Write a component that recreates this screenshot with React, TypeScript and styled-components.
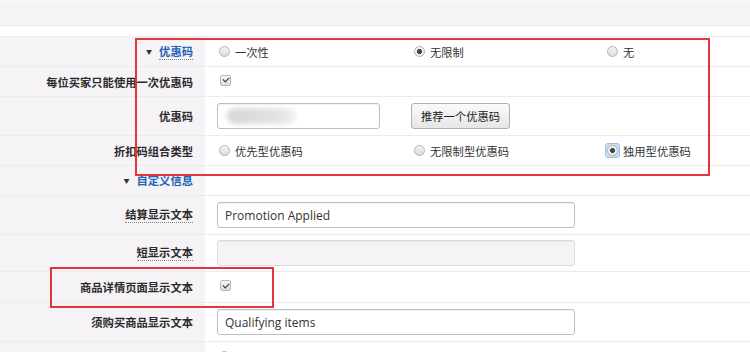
import React from 'react';
import styled, { createGlobalStyle } from 'styled-components';

const GlobalStyle = createGlobalStyle`
  html, body {
    margin: 0;
    padding: 0;
    background: #fff;
  }
  body {
    font-family: "Noto Sans CJK SC", "Open Sans", sans-serif;
    color: #333;
    overflow: hidden;
  }
`;

type RadioOption = { label: string; checked?: boolean; focused?: boolean };

const App: React.FC = () => {
  return (
    <Page>
      <GlobalStyle />
      <TopBand />
      <Form>
        <Row $h={30}>
          <Label>
            <Toggle>
              <Caret>▼</Caret>
              <Hint $blue>优惠码</Hint>
            </Toggle>
          </Label>
          <Value>
            <RadioGroup
              name="usage"
              options={[{ label: '一次性' }, { label: '无限制', checked: true }, { label: '无' }]}
            />
          </Value>
        </Row>
        <Row $h={30}>
          <Label>每位买家只能使用一次优惠码</Label>
          <Value>
            <Check />
          </Value>
        </Row>
        <Row $h={39}>
          <Label>优惠码</Label>
          <Value>
            <InputBox $w={163}>
              <Redacted />
            </InputBox>
            <Button>推荐一个优惠码</Button>
          </Value>
        </Row>
        <Row $h={30}>
          <Label>折扣码组合类型</Label>
          <Value>
            <RadioGroup
              name="combo"
              options={[
                { label: '优先型优惠码' },
                { label: '无限制型优惠码' },
                { label: '独用型优惠码', checked: true, focused: true },
              ]}
            />
          </Value>
        </Row>
        <Row $h={30}>
          <Label>
            <Toggle $plain>
              <Caret>▼</Caret>
              <Hint $blue $plain>自定义信息</Hint>
            </Toggle>
          </Label>
          <Value />
        </Row>
        <Row $h={39}>
          <Label>
            <Hint>结算显示文本</Hint>
          </Label>
          <Value>
            <InputBox $w={358}>Promotion Applied</InputBox>
          </Value>
        </Row>
        <Row $h={37}>
          <Label>
            <Hint>短显示文本</Hint>
          </Label>
          <Value>
            <InputBox $w={358} $disabled />
          </Value>
        </Row>
        <Row $h={31}>
          <Label>商品详情页面显示文本</Label>
          <Value>
            <Check />
          </Value>
        </Row>
        <Row $h={39}>
          <Label>须购买商品显示文本</Label>
          <Value>
            <InputBox $w={358}>Qualifying items</InputBox>
          </Value>
        </Row>
        <Row $h={30}>
          <Label />
          <Value>
            <RadioGroup name="tail" options={[{ label: '提交时显示' }]} />
          </Value>
        </Row>
      </Form>
      <Annotation $top={38} $left={135} $w={575} $h={138} />
      <Annotation $top={267} $left={50} $w={224} $h={41} />
    </Page>
  );
};

const RadioGroup: React.FC<{ name: string; options: RadioOption[] }> = ({ options }) => (
  <Radios>
    {options.map((o, i) => (
      <RadioItem key={i}>
        <RadioWrap $focused={o.focused}>
          <RadioDot $checked={o.checked} />
        </RadioWrap>
        <span>{o.label}</span>
      </RadioItem>
    ))}
  </Radios>
);

export default App;

const Page = styled.div`
  position: relative;
  width: 750px;
  height: 352px;
  overflow: hidden;
  font-size: 11.3px;
`;

const TopBand = styled.div`
  height: 26px;
  background: #f6f3f6;
  border-top: 1px solid #fbfafb;
  border-bottom: 1px solid #e8e5e8;
  box-sizing: border-box;
  margin-bottom: 10px;
`;

const Form = styled.div`
  border-top: 1px solid #ebebeb;
`;

const Row = styled.div<{ $h: number }>`
  display: grid;
  grid-template-columns: 205px 1fr;
  height: ${(p) => p.$h}px;
  box-sizing: border-box;
  border-bottom: 1px solid #ebebeb;
`;

const Label = styled.div`
  background: #f6f3f6;
  display: flex;
  align-items: center;
  justify-content: flex-end;
  padding-right: 12px;
  font-weight: 700;
  color: #2b2b2b;
  white-space: nowrap;
`;

const Value = styled.div`
  display: flex;
  align-items: center;
  padding-left: 12px;
  gap: 31px;
`;

const Toggle = styled.span<{ $plain?: boolean }>`
  display: inline-flex;
  align-items: center;
  gap: 7px;
`;

const Caret = styled.span`
  font-size: 6px;
  color: #333;
  font-weight: 400;
`;

const Hint = styled.span<{ $blue?: boolean; $plain?: boolean }>`
  color: ${(p) => (p.$blue ? '#1e64b4' : '#2b2b2b')};
  border-bottom: ${(p) => (p.$plain ? 'none' : '1px dotted #888')};
  line-height: 15px;
`;

const Radios = styled.div`
  display: grid;
  grid-template-columns: 195px 193px 120px;
  align-items: center;
  font-weight: 400;
  color: #333;
`;

const RadioItem = styled.label`
  display: flex;
  align-items: center;
  gap: 5px;
  padding-left: 2px;
`;

const RadioWrap = styled.span<{ $focused?: boolean }>`
  display: inline-flex;
  align-items: center;
  justify-content: center;
  width: 13px;
  height: 13px;
  margin: -1px;
  box-sizing: border-box;
  border-radius: 2px;
  background: ${(p) => (p.$focused ? '#c9dcf3' : 'transparent')};
  outline: ${(p) => (p.$focused ? '1px solid #9ebde6' : 'none')};
`;

const RadioDot = styled.span<{ $checked?: boolean }>`
  width: 11px;
  height: 11px;
  box-sizing: border-box;
  border-radius: 50%;
  border: 1px solid #b4b4b4;
  background: ${(p) =>
    p.$checked
      ? 'radial-gradient(circle, #444 0 2.2px, #eee 2.8px)'
      : 'linear-gradient(#f4f4f4, #dcdcdc)'};
`;

const Check = styled.span`
  display: inline-flex;
  align-items: center;
  justify-content: center;
  width: 11px;
  height: 11px;
  margin: -3px 0 0 3px;
  box-sizing: border-box;
  border: 1px solid #b8b8b8;
  border-radius: 2px;
  background: linear-gradient(#f6f6f6, #dedede);
  &::after {
    content: '';
    width: 5px;
    height: 3px;
    margin-top: -2px;
    border-left: 1.6px solid #333;
    border-bottom: 1.6px solid #333;
    transform: rotate(-45deg);
  }
`;

const InputBox = styled.div<{ $w: number; $disabled?: boolean }>`
  position: relative;
  width: ${(p) => p.$w}px;
  height: 26px;
  box-sizing: border-box;
  border: 1px solid ${(p) => (p.$disabled ? '#dcdadc' : '#bdbdbd')};
  border-radius: 3px;
  background: ${(p) => (p.$disabled ? '#f6f3f6' : '#fff')};
  box-shadow: inset 0 1px 1px rgba(0, 0, 0, 0.06);
  padding-left: 7px;
  display: flex;
  align-items: center;
  font-family: "Open Sans", "Liberation Sans", sans-serif;
  font-size: 12px;
  color: #333;
  overflow: hidden;
`;

const Redacted = styled.span`
  display: block;
  width: 70px;
  height: 16px;
  margin-left: 2px;
  border-radius: 8px;
  background: linear-gradient(90deg, #d6d6d6, #e2e2e2 70%, #f2f2f2);
  filter: blur(2.5px);
`;

const Button = styled.button`
  height: 26px;
  width: 99px;
  padding: 0;
  border: 1px solid #b0b0b0;
  border-radius: 3px;
  background: linear-gradient(#fafafa, #e6e6e6);
  font-family: "Noto Sans CJK SC", sans-serif;
  font-size: 11.3px;
  color: #222;
`;

const Annotation = styled.div<{ $top: number; $left: number; $w: number; $h: number }>`
  position: absolute;
  top: ${(p) => p.$top}px;
  left: ${(p) => p.$left}px;
  width: ${(p) => p.$w}px;
  height: ${(p) => p.$h}px;
  box-sizing: border-box;
  border: 2px solid #e3363b;
  pointer-events: none;
`;
